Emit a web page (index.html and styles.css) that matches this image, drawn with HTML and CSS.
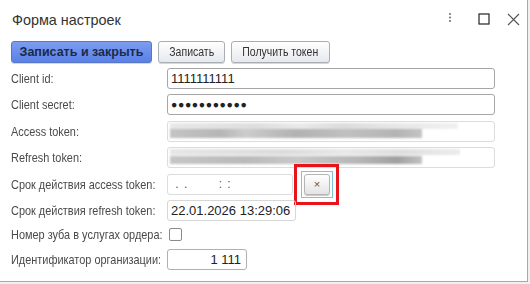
FILE: index.html
```html
<!DOCTYPE html>
<html lang="ru">
<head>
<meta charset="utf-8">
<title>Форма настроек</title>
<link rel="stylesheet" href="styles.css">
</head>
<body>
<div class="window">
  <div class="titlebar">
    <div class="title">Форма настроек</div>
    <div class="controls">
      <svg class="ic-dots" width="4" height="14" viewBox="0 0 4 14"><circle cx="2" cy="2" r="1.1" fill="#777"/><circle cx="2" cy="5.5" r="1.1" fill="#777"/><circle cx="2" cy="9" r="1.1" fill="#777"/></svg>
      <svg class="ic-max" width="12" height="12" viewBox="0 0 12 12"><rect x="1" y="1" width="10" height="10" fill="none" stroke="#333" stroke-width="1.3"/></svg>
      <svg class="ic-close" width="13" height="13" viewBox="0 0 13 13"><path d="M1 1 L12 12 M12 1 L1 12" stroke="#555" stroke-width="1.2" fill="none"/></svg>
    </div>
  </div>
  <div class="toolbar">
    <button class="btn btn-primary">Записать и закрыть</button>
    <button class="btn btn-save"><span class="narrow">Записать</span></button>
    <button class="btn btn-token"><span class="narrow">Получить токен</span></button>
  </div>
  <div class="form">
    <div class="row">
      <div class="label"><span>Client id:</span></div>
      <div class="input wide">1111111111</div>
    </div>
    <div class="row">
      <div class="label"><span>Client secret:</span></div>
      <div class="input wide pass">●●●●●●●●●●●</div>
    </div>
    <div class="row">
      <div class="label"><span>Access token:</span></div>
      <div class="input wide light">
        <div class="blur">
          <div class="band b1"></div>
          <div class="band b2"></div>
        </div>
      </div>
    </div>
    <div class="row">
      <div class="label"><span>Refresh token:</span></div>
      <div class="input wide light">
        <div class="blur">
          <div class="band b3"></div>
          <div class="band b4"></div>
        </div>
      </div>
    </div>
    <div class="row">
      <div class="label"><span>Срок действия access token:</span></div>
      <div class="input date mask">&nbsp;. .&nbsp;&nbsp;&nbsp;&nbsp;&nbsp;&nbsp;&nbsp;: :</div>
      <div class="clear-wrap">
        <div class="focus"><button class="clear-btn">×</button></div>
        <div class="highlight"></div>
      </div>
    </div>
    <div class="row">
      <div class="label"><span>Срок действия refresh token:</span></div>
      <div class="input date2">22.01.2026 13:29:06</div>
    </div>
    <div class="row short">
      <div class="label"><span>Номер зуба в услугах ордера:</span></div>
      <div class="checkbox"></div>
    </div>
    <div class="row">
      <div class="label"><span>Идентификатор организации:</span></div>
      <div class="input num">1 111</div>
    </div>
  </div>
</div>
</body>
</html>
```
FILE: styles.css
```css
* { box-sizing: border-box; }
html, body { margin: 0; padding: 0; }
body {
  width: 530px;
  height: 284px;
  background: #f0f0f0;
  font-family: "Liberation Sans", Arial, sans-serif;
  font-size: 13px;
  color: #404040;
  overflow: hidden;
}
.window {
  width: 528px;
  height: 282px;
  background: #fff;
  border-right: 1px solid #a8a8a8;
  border-bottom: 1px solid #a8a8a8;
}
.titlebar {
  height: 38px;
  display: flex;
  align-items: center;
  justify-content: space-between;
  padding: 0 7px 0 12px;
}
.title {
  font-size: 14.4px;
  color: #333;
  margin-top: 2px;
}
.controls {
  display: flex;
  align-items: center;
}
.ic-dots { margin-right: 26px; }
.ic-max { margin-right: 17px; }
.toolbar {
  display: flex;
  gap: 6px;
  padding: 3px 0 0 11px;
  height: 30px;
}
.btn {
  height: 22px;
  padding: 0;
  font-family: "Liberation Sans", Arial, sans-serif;
  font-size: 13px;
  color: #333;
  border: 1px solid #a9aeb6;
  border-radius: 3px;
  background: linear-gradient(#ffffff, #e6e8ec);
  box-shadow: 0 1px 0 #d8d8d8;
  display: flex;
  align-items: center;
  justify-content: center;
  overflow: visible;
}
.btn-save { width: 67px; }
.btn-token { width: 99px; }
.narrow {
  display: inline-block;
  white-space: nowrap;
  transform: scaleX(0.84);
  transform-origin: center;
  font-size: 12.5px;
}
.btn-primary {
  width: 141px;
  font-size: 12.5px;
  font-weight: bold;
  color: #1a2a4a;
  border-color: #5877c8;
  background: linear-gradient(#7d9cf0, #5a81e8);
}
.form {
  display: flex;
  flex-direction: column;
  gap: 5.4px;
  padding: 0 0 0 11px;
}
.row {
  display: flex;
  align-items: center;
  height: 21px;
  position: relative;
}
.row.short { height: 17px; }
.label {
  width: 156px;
  flex: none;
  color: #4a4a4a;
  white-space: nowrap;
}
.label span {
  display: inline-block;
  font-size: 13px;
  transform: scaleX(0.84);
  transform-origin: left center;
}
.input {
  height: 21px;
  border: 1px solid #a6a6a6;
  border-radius: 3px;
  padding: 0 3px;
  line-height: 19px;
  color: #222;
  font-size: 13px;
  white-space: nowrap;
  overflow: hidden;
}
.wide { width: 328px; }
.pass { font-size: 10.5px; letter-spacing: 0.6px; }
.light { border-color: #dcdcdc; position: relative; }
.blur {
  position: absolute;
  left: 2px;
  top: -1px;
  width: 290px;
  height: 20px;
  filter: blur(1.2px);
}
.band { position: absolute; left: 0; }
.b1 { top: 2px; height: 6px; width: 288px; background: linear-gradient(90deg, #e8e8e8, #dedede 30%, #eaeaea 45%, #dcdcdc 60%, #e8e8e8 80%, #f0f0f0); }
.b2 { top: 8px; height: 9px; width: 252px; background: linear-gradient(90deg, #c4c4c4, #b6b6b6 20%, #cccccc 30%, #b2b2b2 50%, #c0c0c0 70%, #b4b4b4 90%, #c4c4c4); }
.b3 { top: 2px; height: 6px; width: 290px; background: linear-gradient(90deg, #e6e6e6, #dcdcdc 40%, #e8e8e8 60%, #dedede 80%, #ececec); }
.b4 { top: 9px; height: 8px; width: 252px; background: linear-gradient(90deg, #c6c6c6, #bababa 30%, #c8c8c8 50%, #b6b6b6 75%, #a0a0a0 90%, #c2c2c2); }
.date { width: 126px; border-color: #dcdcdc; }
.mask { color: #555; letter-spacing: 1px; font-size: 12px; }
.date2 { width: 129px; border-color: #d6d6d6; }
.num { width: 80px; text-align: right; padding-right: 5px; border-color: #b0b0b0; }
.checkbox {
  width: 13px;
  height: 13px;
  border: 1px solid #8a8a8a;
  border-radius: 2px;
  margin-left: 2px;
  background: #fff;
}
.clear-wrap {
  position: relative;
  margin-left: 8px;
}
.focus {
  width: 32px;
  height: 27px;
  border: 1px solid #79c6d9;
  display: flex;
  align-items: center;
  justify-content: center;
}
.clear-btn {
  width: 26px;
  height: 21px;
  padding: 0;
  border: 1px solid #b4b4b4;
  border-radius: 3px;
  background: linear-gradient(#ffffff, #e4e4e4);
  font-family: "Liberation Sans", Arial, sans-serif;
  font-size: 11px;
  color: #555;
  box-shadow: 0 1px 1px #c8c8c8;
}
.highlight {
  position: absolute;
  left: -7px;
  top: -7px;
  width: 45px;
  height: 41px;
  border: 3px solid #e8141c;
}
```
